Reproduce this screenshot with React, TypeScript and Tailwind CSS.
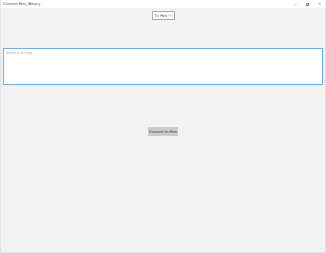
import React from "react";

export default function App() {
  return (
    <div className="w-[326px] h-[253px] bg-[#f2f2f2] flex flex-col border-x border-b border-[#e2e2e2]" style={{ fontFamily: '"Segoe UI", "Noto Sans", "Liberation Sans", sans-serif' }}>
      <div className="h-[8px] bg-white flex items-center justify-between pl-[2px] pr-[4px]">
        <span className="text-[4px] leading-none text-[#444]">Convert Hex, Binary</span>
        <div className="flex items-center gap-[9px] text-[4px] leading-none text-[#777]">
          <span>—</span>
          <span className="w-[3px] h-[3px] border-[0.5px] border-[#888]"></span>
          <span>✕</span>
        </div>
      </div>
      <div className="flex justify-center pt-[3px]">
        <div className="w-[23px] h-[9px] border border-[#aaa] bg-white flex items-center justify-between px-[2px]">
          <span className="text-[4px] leading-none text-[#444]">To Hex</span>
          <svg width="4" height="3" viewBox="0 0 4 3"><path d="M0.3 0.6 L2 2.3 L3.7 0.6" stroke="#777" strokeWidth="0.5" fill="none" /></svg>
        </div>
      </div>
      <div className="px-[2px] pt-[28px]">
        <div className="h-[37px] border border-[#6cb0ea] bg-white px-[2px] pt-[2px]">
          <span className="text-[4px] leading-none text-[#aaa] block">Enter a string</span>
        </div>
      </div>
      <div className="flex justify-center pt-[42px]">
        <div className="w-[30px] h-[9px] bg-[#cccccc] flex items-center justify-center">
          <span className="text-[4px] leading-none text-[#333]">Convert to Hex</span>
        </div>
      </div>
    </div>
  );
}
